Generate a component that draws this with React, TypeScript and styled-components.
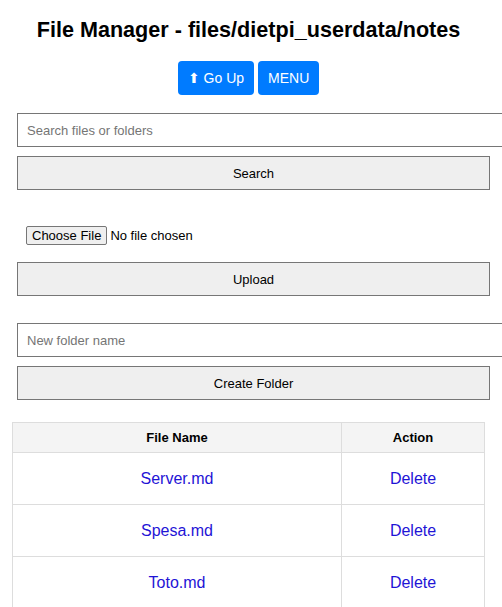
import styled, { createGlobalStyle } from 'styled-components'

const GlobalStyle = createGlobalStyle`
  body {
    margin: 0;
    background: #fff;
    font-family: "Liberation Sans", Arial, sans-serif;
    color: #000;
  }
`

const Page = styled.div`
  width: 473px;
  padding: 0 0 0 12px;
`

const Title = styled.h1`
  margin: 17px 0 18px;
  font-size: 21.6px;
  font-weight: bold;
  text-align: center;
  line-height: 26px;
`

const NavRow = styled.div`
  display: flex;
  justify-content: center;
  gap: 4px;
  margin-bottom: 18px;
`

const NavButton = styled.button`
  height: 34px;
  padding: 0 10px;
  border: none;
  border-radius: 4px;
  background: #007bff;
  color: #fff;
  font-family: "Liberation Sans", Arial, sans-serif;
  font-size: 14px;
  cursor: pointer;
`

const Form = styled.form<{ $gapAfter: number }>`
  display: flex;
  flex-direction: column;
  gap: 9px;
  width: 473px;
  margin: 0 0 ${(p) => p.$gapAfter}px 5px;
`

const TextInput = styled.input`
  width: 100%;
  box-sizing: content-box;
  padding: 0 9px;
  border: 1px solid #767676;
  height: 32px;
  font-family: "Liberation Sans", Arial, sans-serif;
  font-size: 13px;
  &::placeholder {
    color: #757575;
  }
`

const WideButton = styled.button`
  width: 100%;
  height: 34px;
  border: 1px solid #767676;
  border-radius: 0;
  background: #efefef;
  color: #000;
  font-family: "Liberation Sans", Arial, sans-serif;
  font-size: 13px;
`

const FileRow = styled.div`
  display: flex;
  align-items: center;
  gap: 3px;
  height: 18px;
  margin: 36px 0 9px 9px;
  font-size: 13px;
`

const FileButton = styled.span`
  display: inline-block;
  padding: 1px 5px;
  border: 1px solid #767676;
  border-radius: 2px;
  background: #efefef;
`

const Table = styled.table`
  width: 473px;
  border-collapse: collapse;
  font-family: "Liberation Sans", Arial, sans-serif;
`

const HeadCell = styled.th`
  height: 29px;
  padding: 0;
  background: #f4f4f4;
  border: 1px solid #ddd;
  font-size: 13px;
  font-weight: bold;
  text-align: center;
`

const Cell = styled.td<{ $w?: number }>`
  height: 51px;
  padding: 0;
  border: 1px solid #ddd;
  text-align: center;
  font-size: 16px;
  ${(p) => (p.$w ? `width: ${p.$w}px;` : '')}
`

const Link = styled.a`
  color: #1f14d6;
  text-decoration: none;
`

const files = ['Server.md', 'Spesa.md', 'Toto.md']

export default function App() {
  return (
    <Page>
      <GlobalStyle />
      <Title>File Manager - files/dietpi_userdata/notes</Title>
      <NavRow>
        <NavButton>⬆ Go Up</NavButton>
        <NavButton>MENU</NavButton>
      </NavRow>

      <Form $gapAfter={0} onSubmit={(e) => e.preventDefault()}>
        <TextInput placeholder="Search files or folders" />
        <WideButton type="submit">Search</WideButton>
      </Form>

      <Form $gapAfter={27} onSubmit={(e) => e.preventDefault()}>
        <FileRow>
          <FileButton>Choose File</FileButton>
          <span>No file chosen</span>
        </FileRow>
        <WideButton type="submit">Upload</WideButton>
      </Form>

      <Form $gapAfter={22} onSubmit={(e) => e.preventDefault()}>
        <TextInput placeholder="New folder name" />
        <WideButton type="submit">Create Folder</WideButton>
      </Form>

      <Table>
        <thead>
          <tr>
            <HeadCell>File Name</HeadCell>
            <HeadCell>Action</HeadCell>
          </tr>
        </thead>
        <tbody>
          {files.map((f) => (
            <tr key={f}>
              <Cell $w={328}>
                <Link href="#">{f}</Link>
              </Cell>
              <Cell>
                <Link href="#">Delete</Link>
              </Cell>
            </tr>
          ))}
        </tbody>
      </Table>
    </Page>
  )
}
